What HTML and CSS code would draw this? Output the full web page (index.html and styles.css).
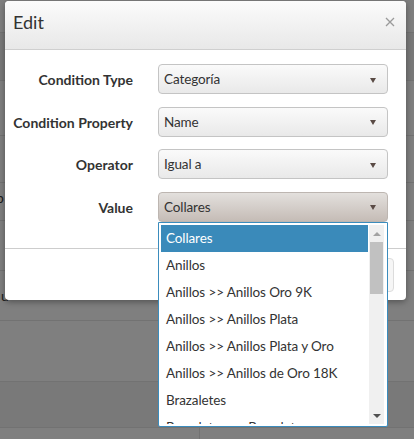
FILE: index.html
```html
<!DOCTYPE html>
<html lang="es">
<head>
<meta charset="utf-8">
<title>Edit</title>
<link rel="stylesheet" href="styles.css">
</head>
<body>
<div class="page">
  <div class="row h33"></div>
  <div class="row h48 alt"></div>
  <div class="row h55"></div>
  <div class="row h47"></div>
  <div class="row h38"><span class="frag frag-p">p</span></div>
  <div class="row h50"></div>
  <div class="row h50"><span class="frag frag-u">u</span></div>
  <div class="row h61"></div>
  <div class="row h46 alt"></div>
  <div class="row last"><div class="cell"></div></div>
</div>

<div class="modal">
  <div class="modal-header">
    <span class="modal-title">Edit</span>
    <svg class="close" width="10" height="10" viewBox="0 0 10 10"><path d="M1 1 L9 9 M9 1 L1 9" stroke="#9a9a9a" stroke-width="1.3" fill="none"/></svg>
  </div>
  <div class="modal-body">
    <label class="lbl">Condition Type</label>
    <div class="select"><span>Categoría</span><i class="caret"></i></div>
    <label class="lbl">Condition Property</label>
    <div class="select"><span>Name</span><i class="caret"></i></div>
    <label class="lbl">Operator</label>
    <div class="select"><span>Igual a</span><i class="caret"></i></div>
    <label class="lbl">Value</label>
    <div class="select open"><span>Collares</span><i class="caret"></i></div>
  </div>
  <div class="modal-footer">
    <button class="btn">Guardar</button>
  </div>
</div>

<div class="dropdown">
  <ul class="list">
    <li class="item active">Collares</li>
    <li class="item">Anillos</li>
    <li class="item">Anillos &gt;&gt; Anillos Oro 9K</li>
    <li class="item">Anillos &gt;&gt; Anillos Plata</li>
    <li class="item">Anillos &gt;&gt; Anillos Plata y Oro</li>
    <li class="item">Anillos &gt;&gt; Anillos de Oro 18K</li>
    <li class="item">Brazaletes</li>
    <li class="item">Brazaletes &gt;&gt; Brazaletes</li>
  </ul>
  <div class="scrollbar">
    <div class="sb-btn"><i class="tri-up"></i></div>
    <div class="sb-track"><div class="sb-thumb"></div></div>
    <div class="sb-btn"><i class="tri-down"></i></div>
  </div>
</div>
</body>
</html>
```
FILE: styles.css
```css
* { box-sizing: border-box; }
html, body { margin: 0; padding: 0; }
body {
  width: 414px;
  height: 439px;
  overflow: hidden;
  background: #7f7f7f;
  font-family: "Lato", "Liberation Sans", sans-serif;
  font-size: 14px;
  color: #333;
  position: relative;
}

/* dimmed page behind the modal */
.page { display: flex; flex-direction: column; height: 100%; }
.row { border-bottom: 1px solid #727272; background: #7f7f7f; flex: none; }
.row.alt { background: #797979; }
.h33 { height: 33px; }
.h48 { height: 48px; }
.h55 { height: 55px; }
.h47 { height: 47px; }
.h38 { height: 38px; }
.h50 { height: 50px; }
.h61 { height: 61px; }
.h46 { height: 46px; }
.row.last { flex: 1; border-bottom: 0; display: flex; }
.row.last .cell { width: 200px; border-right: 1px solid #727272; }
.frag { display: block; color: #1a1a1a; font-size: 14px; line-height: 16px; }
.frag-p { margin: 7px 0 0 -4px; }
.frag-u { margin: 17px 0 0 1px; }

/* modal */
.modal {
  position: absolute;
  left: 5px;
  top: 1px;
  width: 401px;
  height: 299px;
  background: #fff;
  border-radius: 4px;
  box-shadow: 0 2px 6px rgba(0,0,0,.35);
  overflow: hidden;
  display: flex;
  flex-direction: column;
}
.modal-header {
  height: 49px;
  flex: none;
  border-bottom: 1px solid #cfcfcf;
  background: linear-gradient(#fbfbfb, #e8e8e8);
  display: flex;
  justify-content: space-between;
  align-items: flex-start;
  padding: 10px 11px 0 8px;
}
.modal-title { font-size: 18px; line-height: 22px; color: #333; }
.close { margin-top: 6px; }

.modal-body {
  flex: none;
  height: 198px;
  display: grid;
  grid-template-columns: 128px 230px;
  grid-auto-rows: 30px;
  column-gap: 25px;
  row-gap: 12.5px;
  padding: 14px 18px 0 0;
}
.lbl {
  font-weight: bold;
  font-size: 14px;
  color: #333;
  text-align: right;
  line-height: 30px;
  padding-top: 1px;
  white-space: nowrap;
}
.select {
  border: 1px solid #c4c4c4;
  border-radius: 4px;
  background: linear-gradient(#fafafa, #e9e9e9);
  display: flex;
  align-items: center;
  justify-content: space-between;
  padding: 0 11px 0 5px;
  color: #333;
  font-size: 13.5px;
  letter-spacing: -0.1px;
}
.select.open {
  background: linear-gradient(#e3e0dd, #c5bcb6);
  border-color: #bdb6b1;
}
.caret {
  width: 0; height: 0;
  border-left: 3px solid transparent;
  border-right: 3px solid transparent;
  border-top: 5px solid #5a4b45;
  margin-top: 2px;
}

.modal-footer {
  flex: 1;
  border-top: 1px solid #cdcdcd;
  display: flex;
  justify-content: flex-end;
  align-items: flex-start;
  padding: 9px 12px 0 0;
}
.btn {
  height: 34px;
  width: 90px;
  border: 1px solid #dcdcdc;
  border-radius: 4px;
  background: #f6f6f6;
  font-family: inherit;
  font-size: 14px;
  color: #333;
}

/* open select list */
.dropdown {
  position: absolute;
  left: 158px;
  top: 222px;
  width: 230px;
  height: 205px;
  border: 1px solid #3b8cbd;
  border-radius: 0 0 2px 2px;
  background: #fff;
  padding: 2px 3px 2px 2px;
  display: flex;
}
.list {
  flex: 1;
  margin: 0;
  padding: 0 1px 0 0;
  list-style: none;
  overflow: hidden;
}
.item {
  height: 27px;
  line-height: 27px;
  padding-left: 5px;
  white-space: nowrap;
  color: #333;
  font-size: 13.5px;
  letter-spacing: -0.1px;
}
.item.active { background: #3a8aba; color: #fff; }
.scrollbar {
  width: 15px;
  background: #f0f0f0;
  display: flex;
  flex-direction: column;
}
.sb-btn { height: 15px; display: flex; align-items: center; justify-content: center; flex: none; }
.sb-track { flex: 1; padding: 2px 1px 0; }
.sb-thumb { height: 52px; background: #c1c1c1; }
.tri-up {
  width: 0; height: 0;
  border-left: 4px solid transparent;
  border-right: 4px solid transparent;
  border-bottom: 4px solid #a3a3a3;
  margin-top: 2px;
}
.tri-down {
  width: 0; height: 0;
  border-left: 4px solid transparent;
  border-right: 4px solid transparent;
  border-top: 4px solid #505050;
  margin-bottom: 2px;
}
```
